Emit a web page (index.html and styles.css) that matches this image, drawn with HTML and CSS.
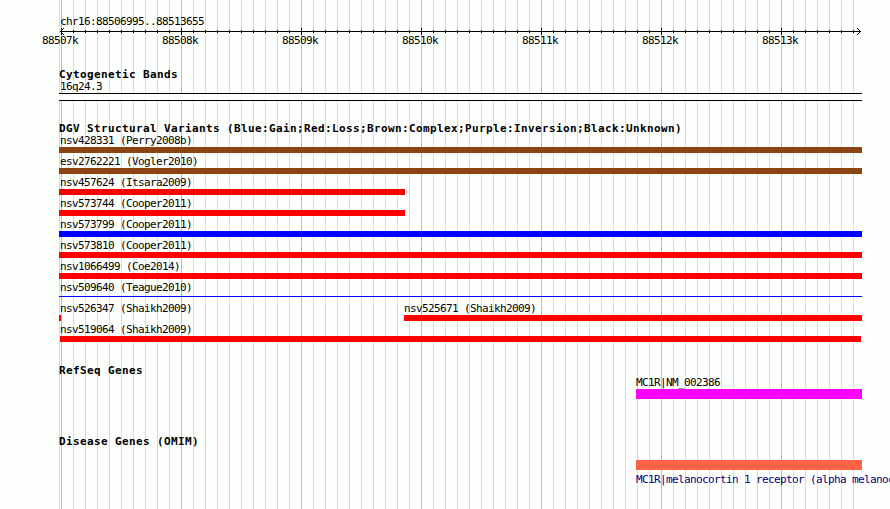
FILE: index.html
```
<!DOCTYPE html>
<html lang="en">
<head>
<meta charset="utf-8">
<title>chr16:88506995..88513655</title>
<link rel="stylesheet" href="styles.css">
</head>
<body>
<main class="browser">
  <header class="ruler">
    <div class="label">chr16:88506995..88513655</div>
    <svg class="scale" width="803" height="7" viewBox="0 0 803 7" shape-rendering="crispEdges">
      <defs>
        <pattern id="minor" x="2" y="0" width="12" height="7" patternUnits="userSpaceOnUse"><path d="M0 2h1v3h-1z"/></pattern>
        <pattern id="major" x="2" y="0" width="120" height="7" patternUnits="userSpaceOnUse"><path d="M0 0h1v7h-1z"/></pattern>
      </defs>
      <path d="M1 3h801v1H1z"/>
      <rect x="2" width="793" height="7" fill="url(#minor)"/>
      <rect x="2" width="793" height="7" fill="url(#major)"/>
      <path d="M2 2h1v3H2zM3 1h1v1H3zM3 5h1v1H3zM4 0h1v1H4zM4 6h1v1H4zM800 2h1v3h-1zM799 1h1v1h-1zM799 5h1v1h-1zM798 0h1v1h-1zM798 6h1v1h-1z"/>
    </svg>
    <div class="ticks label"><span>88507k</span><span>88508k</span><span>88509k</span><span>88510k</span><span>88511k</span><span>88512k</span><span>88513k</span></div>
  </header>

  <section class="track cyto">
    <h2>Cytogenetic Bands</h2>
    <div class="label">16q24.3</div>
    <div class="band"></div>
  </section>

  <section class="track variants">
    <h2>DGV Structural Variants (Blue:Gain;Red:Loss;Brown:Complex;Purple:Inversion;Black:Unknown)</h2>
    <div class="row"><div class="feature"><div class="label">nsv428331 (Perry2008b)</div><div class="bar complex"></div></div></div>
    <div class="row"><div class="feature"><div class="label">esv2762221 (Vogler2010)</div><div class="bar complex"></div></div></div>
    <div class="row"><div class="feature partial"><div class="label">nsv457624 (Itsara2009)</div><div class="bar loss"></div></div></div>
    <div class="row"><div class="feature partial"><div class="label">nsv573744 (Cooper2011)</div><div class="bar loss"></div></div></div>
    <div class="row"><div class="feature"><div class="label">nsv573799 (Cooper2011)</div><div class="bar gain"></div></div></div>
    <div class="row"><div class="feature"><div class="label">nsv573810 (Cooper2011)</div><div class="bar loss"></div></div></div>
    <div class="row"><div class="feature"><div class="label">nsv1066499 (Coe2014)</div><div class="bar loss"></div></div></div>
    <div class="row"><div class="feature"><div class="label">nsv509640 (Teague2010)</div><div class="bar gain thin"></div></div></div>
    <div class="row split">
      <div class="feature"><div class="label">nsv526347 (Shaikh2009)</div><div class="bar loss sliver"></div></div>
      <div class="feature right"><div class="label">nsv525671 (Shaikh2009)</div><div class="bar loss"></div></div>
    </div>
    <div class="row"><div class="feature"><div class="label">nsv519064 (Shaikh2009)</div><div class="bar loss inset"></div></div></div>
  </section>

  <section class="track refseq">
    <h2>RefSeq Genes</h2>
    <div class="gene">
      <div class="label">MC1R|NM_002386</div>
      <div class="bar transcript"></div>
    </div>
  </section>

  <section class="track omim">
    <h2>Disease Genes (OMIM)</h2>
    <div class="gene">
      <div class="bar disease"></div>
      <div class="label">MC1R|melanocortin 1 receptor (alpha melanocyte</div>
    </div>
  </section>
</main>
</body>
</html>
```
FILE: styles.css
```
* { box-sizing: border-box; }

body {
  margin: 0;
  height: 509px;
  overflow: hidden;
  background: #fdfffc;
  color: #000;
}

.browser {
  width: 803px;
  height: 509px;
  margin-left: 59px;
  padding-top: 15px;
  background:
    linear-gradient(#afeeea, #afeeea) 0 0 / 1px 100% no-repeat,
    repeating-linear-gradient(90deg, #87ceeb 0 1px, transparent 1px 120px) 2px 0 / 801px 100% no-repeat,
    repeating-linear-gradient(90deg, #afeeea 0 1px, transparent 1px 12px) 2px 0 / 801px 100% no-repeat;
}

.label {
  height: 13px;
  padding-left: 1px;
  font: 11px/13px "DejaVu Sans Mono", monospace;
  letter-spacing: -0.622px;
  white-space: nowrap;
}

h2 {
  height: 12px;
  margin: 0;
  font: bold 11px/13px "DejaVu Sans Mono", monospace;
  letter-spacing: 0.378px;
  white-space: nowrap;
}

.scale { display: block; }

.ticks {
  display: grid;
  grid-template-columns: repeat(7, 120px);
  height: 12px;
  margin-left: -17px;
  padding-left: 0;
  line-height: 11px;
}

.cyto { margin-top: 21px; }

.band {
  height: 8px;
  border: solid #000;
  border-width: 1px 0;
  background: #fdfffc;
}

.variants { margin-top: 21px; }

.row { height: 21px; }
.split { display: grid; grid-template-columns: 345px 458px; }
.partial { width: 346px; }
.right .label { padding-left: 0; }

.bar { height: 6px; }
.complex { background: #8b4513; }
.loss { background: #f00; }
.gain { background: #00f; }
.thin { height: 1px; margin-top: 2px; }
.sliver { width: 2px; }
.inset { margin: 0 1px; }

.refseq { margin-top: 20px; }
.gene { width: 226px; margin-left: 577px; }
.gene .bar { height: 10px; }
.gene .label { padding-left: 0; }
.transcript { background: #f0f; }

.omim { margin-top: 36px; }
.omim .gene { margin-top: 13px; }
.omim .label { margin-top: 3px; color: #000080; }
.disease { background: #ff6347; }
```
